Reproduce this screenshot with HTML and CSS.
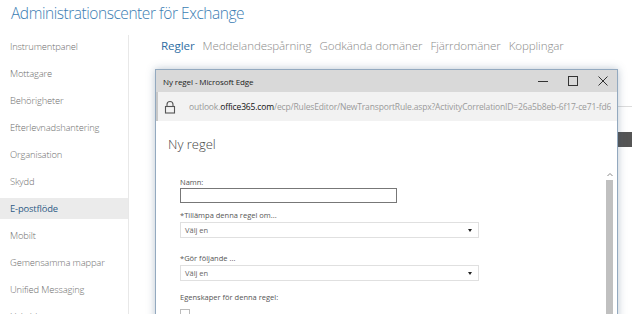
FILE: index.html
```html
<!DOCTYPE html>
<html lang="sv">
<head>
<meta charset="utf-8">
<title>Administrationscenter för Exchange</title>
<link rel="stylesheet" href="styles.css">
</head>
<body>
<div class="page">
  <header class="app-title">Administrationscenter för Exchange</header>
  <div class="layout">
    <nav class="sidebar">
      <a class="nav-item">Instrumentpanel</a>
      <a class="nav-item">Mottagare</a>
      <a class="nav-item">Behörigheter</a>
      <a class="nav-item">Efterlevnadshantering</a>
      <a class="nav-item">Organisation</a>
      <a class="nav-item">Skydd</a>
      <a class="nav-item active">E-postflöde</a>
      <a class="nav-item">Mobilt</a>
      <a class="nav-item">Gemensamma mappar</a>
      <a class="nav-item">Unified Messaging</a>
      <a class="nav-item">Hybrid</a>
    </nav>
    <main class="main">
      <div class="tabs">
        <span class="tab active">Regler</span>
        <span class="tab">Meddelandespårning</span>
        <span class="tab">Godkända domäner</span>
        <span class="tab">Fjärrdomäner</span>
        <span class="tab">Kopplingar</span>
      </div>
      <div class="toolbar"></div>
      <div class="list-header"></div>
    </main>
  </div>

  <div class="popup">
    <div class="titlebar">
      <span class="win-title">Ny regel - Microsoft Edge</span>
      <div class="win-controls">
        <svg class="ctl" width="12" height="12" viewBox="0 0 12 12"><path d="M1 6.5h10" stroke="#333" stroke-width="1"/></svg>
        <svg class="ctl" width="12" height="12" viewBox="0 0 12 12"><rect x="1.5" y="1.5" width="9" height="9" fill="none" stroke="#333" stroke-width="1"/></svg>
        <svg class="ctl" width="12" height="12" viewBox="0 0 12 12"><path d="M1.5 1.5l9 9M10.5 1.5l-9 9" stroke="#333" stroke-width="1"/></svg>
      </div>
    </div>
    <div class="addressbar">
      <svg class="lock" width="12" height="14" viewBox="0 0 12 14"><path d="M3 6.5V4.5a3 3 0 0 1 6 0v2" fill="none" stroke="#555" stroke-width="1.1"/><rect x="1.5" y="6.5" width="9" height="6.5" fill="none" stroke="#555" stroke-width="1.1"/></svg>
      <span class="url"><span class="url-dim">outlook.</span><span class="url-host">office365.com</span><span class="url-dim">/ecp/RulesEditor/NewTransportRule.aspx?ActivityCorrelationID=26a5b8eb-6f17-ce71-fd6</span></span>
    </div>
    <div class="content">
      <h1 class="dlg-title">Ny regel</h1>
      <div class="form">
        <div class="field">
          <label class="lbl">Namn:</label>
          <div class="textbox"></div>
        </div>
        <div class="field">
          <label class="lbl">*Tillämpa denna regel om...</label>
          <div class="select"><span>Välj en</span><span class="caret"></span></div>
        </div>
        <div class="field gap">
          <label class="lbl">*Gör följande ...</label>
          <div class="select"><span>Välj en</span><span class="caret"></span></div>
        </div>
        <div class="field gap2">
          <label class="lbl">Egenskaper för denna regel:</label>
          <div class="checkbox"></div>
        </div>
      </div>
      <div class="scrollbar">
        <svg class="sb-arrow" width="6" height="5" viewBox="0 0 6 5"><path d="M0.5 4L3 1.5L5.5 4" fill="none" stroke="#888" stroke-width="1"/></svg>
        <div class="sb-thumb"></div>
      </div>
    </div>
  </div>
</div>
</body>
</html>
```
FILE: styles.css
```css
* { box-sizing: border-box; }
html, body { margin: 0; padding: 0; background: #fff; }
body {
  width: 632px; height: 314px; overflow: hidden;
  font-family: "Open Sans", "Noto Sans", sans-serif;
  color: #666;
}
.page { position: relative; width: 632px; height: 314px; overflow: hidden; }

.app-title {
  font-size: 15.5px; font-weight: 300; color: #3b7db3;
  padding: 2px 0 0 11px; height: 35px; line-height: 22px;
  letter-spacing: -0.45px;
}

.layout { display: flex; }
.sidebar {
  width: 129px; border-right: 1px solid #e8e8e8;
  display: flex; flex-direction: column;
  padding-top: 1px; min-height: 300px;
}
.nav-item {
  display: block; height: 27px; line-height: 21px;
  font-size: 9.4px; font-weight: 300; color: #6e6e6e; padding: 0 0 6px 10px;
  letter-spacing: -0.15px;
}
.nav-item.active {
  background: #ebebeb; color: #2f5b86; height: 21px; padding: 0 0 0 10px;
  margin: 0 0 6px 0; font-weight: 400;
}

.main { flex: 1; padding-left: 32px; }
.tabs { display: flex; gap: 8px; height: 29px; line-height: 22px; }
.tab { font-size: 11.6px; color: #8a8a8a; font-weight: 300; letter-spacing: -0.1px; }
.tab.active { color: #2f6ea3; font-weight: 400; }
.toolbar { height: 43px; border-bottom: 1px solid #dcdcdc; }
.list-header { margin-top: 25px; height: 15px; background: #555; }

.popup {
  position: absolute; left: 155px; top: 69px; width: 463px; height: 260px;
  border: 1px solid #93a9bf; background: #fff;
  box-shadow: 0 0 8px rgba(60, 90, 120, 0.35);
  display: flex; flex-direction: column;
}
.titlebar {
  height: 22px; background: #d9d9d9; display: flex; align-items: center;
  justify-content: space-between; padding: 0 8px 0 7px;
}
.win-title { font-size: 8px; color: #222; letter-spacing: -0.1px; }
.win-controls { display: flex; gap: 18px; align-items: center; }
.ctl { display: block; }
.addressbar {
  height: 29px; background: #f2f2f2; display: flex; align-items: center;
  padding-left: 6px; border-left: 2px solid #c8c8c8;
}
.lock { margin-right: 13px; flex: none; }
.url { font-size: 8.5px; white-space: nowrap; overflow: hidden; letter-spacing: -0.15px; }
.url-dim { color: #9a9a9a; }
.url-host { color: #111; }

.content { position: relative; flex: 1; }
.dlg-title {
  margin: 0; font-size: 13px; font-weight: 300; color: #444;
  padding: 13px 0 0 12px; height: 55px; line-height: 20px;
}
.form { padding-left: 24px; }
.field { display: flex; flex-direction: column; }
.field.gap { margin-top: 14px; }
.field.gap2 { margin-top: 10px; }
.lbl { font-size: 7.5px; color: #555; height: 12px; line-height: 12px; }
.textbox { width: 217px; height: 15px; border: 1px solid #777; margin-bottom: 6px; }
.select {
  width: 299px; height: 16px; border: 1px solid #e0e0e0; margin-top: 1px;
  display: flex; align-items: center; justify-content: space-between;
  padding: 0 6px 0 4px; font-size: 7.5px; color: #666;
}
.caret {
  width: 0; height: 0; border-left: 2.5px solid transparent; border-right: 2.5px solid transparent;
  border-top: 3px solid #222;
}
.checkbox { width: 10px; height: 10px; border: 1px solid #bbb; margin-top: 6px; }

.scrollbar {
  position: absolute; right: 4px; top: 49px; width: 7px; bottom: 0;
  display: flex; flex-direction: column; align-items: center;
}
.sb-arrow { margin: 2px 0 3px; }
.sb-thumb { width: 7px; flex: 1; background: #c0c0c0; }
```
